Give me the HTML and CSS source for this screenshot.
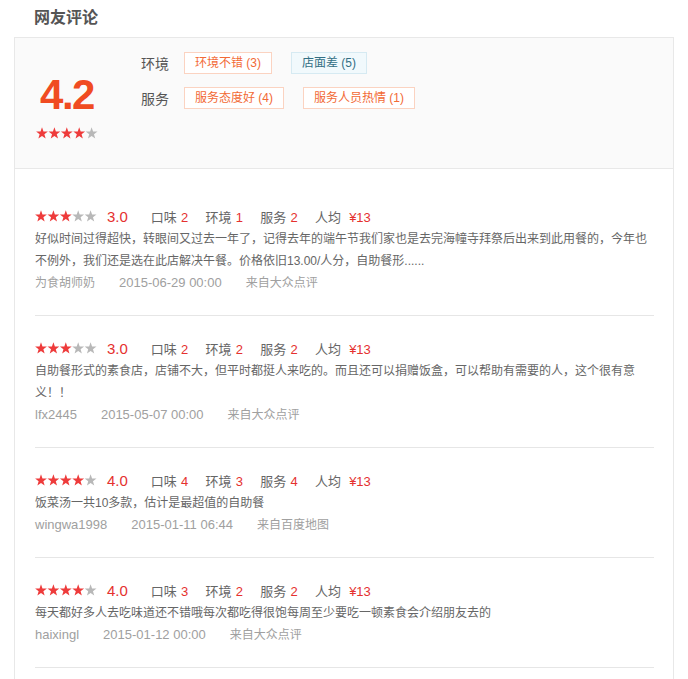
FILE: index.html
```html
<!DOCTYPE html>
<html lang="zh-CN">
<head>
<meta charset="utf-8">
<title>网友评论</title>
<link rel="stylesheet" href="styles.css">
</head>
<body>
<svg class="defs" width="0" height="0" aria-hidden="true">
  <defs>
    <polygon id="star" points="6,0.3 7.47,4.48 11.9,4.58 8.38,7.27 9.64,11.5 6,9 2.36,11.5 3.62,7.27 0.1,4.58 4.53,4.48"/>
  </defs>
</svg>
<div class="page">
  <h2 class="title">网友评论</h2>
  <div class="card">
    <div class="summary">
      <div class="score-col">
        <div class="big-score">4.2</div>
        <svg class="stars" width="62" height="12" viewBox="0 0 62 12">
          <use href="#star" x="0" class="on"/><use href="#star" x="12.4" class="on"/><use href="#star" x="24.8" class="on"/><use href="#star" x="37.2" class="on"/><use href="#star" x="49.6" class="off"/>
        </svg>
      </div>
      <div class="tags-col">
        <div class="tag-row">
          <span class="tag-label">环境</span>
          <span class="tag tag-good">环境不错 (3)</span>
          <span class="tag tag-bad">店面差 (5)</span>
        </div>
        <div class="tag-row">
          <span class="tag-label">服务</span>
          <span class="tag tag-good">服务态度好 (4)</span>
          <span class="tag tag-good">服务人员热情 (1)</span>
        </div>
      </div>
    </div>

    <ul class="reviews">
      <li class="review">
        <div class="score-row">
          <svg class="stars" width="62" height="12" viewBox="0 0 62 12">
            <use href="#star" x="0" class="on"/><use href="#star" x="12.4" class="on"/><use href="#star" x="24.8" class="on"/><use href="#star" x="37.2" class="off"/><use href="#star" x="49.6" class="off"/>
          </svg>
          <span class="rate">3.0</span>
          <span class="item">口味<em>2</em></span>
          <span class="item">环境<em>1</em></span>
          <span class="item">服务<em>2</em></span>
          <span class="item">人均<em class="money">¥13</em></span>
        </div>
        <p class="text">好似时间过得超快，转眼间又过去一年了，记得去年的端午节我们家也是去完海幢寺拜祭后出来到此用餐的，今年也不例外，我们还是选在此店解决午餐。价格依旧13.00/人分，自助餐形......</p>
        <div class="meta"><span>为食胡师奶</span><span class="latin">2015-06-29 00:00</span><span>来自大众点评</span></div>
      </li>
      <li class="review">
        <div class="score-row">
          <svg class="stars" width="62" height="12" viewBox="0 0 62 12">
            <use href="#star" x="0" class="on"/><use href="#star" x="12.4" class="on"/><use href="#star" x="24.8" class="on"/><use href="#star" x="37.2" class="off"/><use href="#star" x="49.6" class="off"/>
          </svg>
          <span class="rate">3.0</span>
          <span class="item">口味<em>2</em></span>
          <span class="item">环境<em>2</em></span>
          <span class="item">服务<em>2</em></span>
          <span class="item">人均<em class="money">¥13</em></span>
        </div>
        <p class="text">自助餐形式的素食店，店铺不大，但平时都挺人来吃的。而且还可以捐赠饭盒，可以帮助有需要的人，这个很有意义！！</p>
        <div class="meta"><span class="latin">lfx2445</span><span class="latin">2015-05-07 00:00</span><span>来自大众点评</span></div>
      </li>
      <li class="review">
        <div class="score-row">
          <svg class="stars" width="62" height="12" viewBox="0 0 62 12">
            <use href="#star" x="0" class="on"/><use href="#star" x="12.4" class="on"/><use href="#star" x="24.8" class="on"/><use href="#star" x="37.2" class="on"/><use href="#star" x="49.6" class="off"/>
          </svg>
          <span class="rate">4.0</span>
          <span class="item">口味<em>4</em></span>
          <span class="item">环境<em>3</em></span>
          <span class="item">服务<em>4</em></span>
          <span class="item">人均<em class="money">¥13</em></span>
        </div>
        <p class="text">饭菜汤一共10多款，估计是最超值的自助餐</p>
        <div class="meta"><span class="latin">wingwa1998</span><span class="latin">2015-01-11 06:44</span><span>来自百度地图</span></div>
      </li>
      <li class="review">
        <div class="score-row">
          <svg class="stars" width="62" height="12" viewBox="0 0 62 12">
            <use href="#star" x="0" class="on"/><use href="#star" x="12.4" class="on"/><use href="#star" x="24.8" class="on"/><use href="#star" x="37.2" class="on"/><use href="#star" x="49.6" class="off"/>
          </svg>
          <span class="rate">4.0</span>
          <span class="item">口味<em>3</em></span>
          <span class="item">环境<em>2</em></span>
          <span class="item">服务<em>2</em></span>
          <span class="item">人均<em class="money">¥13</em></span>
        </div>
        <p class="text">每天都好多人去吃味道还不错哦每次都吃得很饱每周至少要吃一顿素食会介绍朋友去的</p>
        <div class="meta"><span class="latin">haixingl</span><span class="latin">2015-01-12 00:00</span><span>来自大众点评</span></div>
      </li>
    </ul>
  </div>
</div>
</body>
</html>
```

FILE: styles.css
```css
* {
  box-sizing: border-box;
}

html, body {
  margin: 0;
  padding: 0;
  background: #fff;
}

body {
  font-family: "Liberation Sans", "Noto Sans CJK SC", sans-serif;
  color: #666;
  font-size: 12px;
}

.defs {
  position: absolute;
  width: 0;
  height: 0;
  overflow: hidden;
}

.page {
  padding-left: 14px;
  width: 674px;
}

.title {
  margin: 0;
  height: 37px;
  line-height: 36px;
  padding-left: 20px;
  font-size: 16px;
  font-weight: bold;
  color: #555;
}

.card {
  border: 1px solid #e8e8e8;
  width: 660px;
}

.summary {
  display: flex;
  height: 131px;
  background: #fafafa;
  border-bottom: 1px solid #e8e8e8;
}

.score-col {
  display: flex;
  flex-direction: column;
  align-items: center;
  width: 62px;
  margin-left: 21px;
  padding-top: 36px;
}

.big-score {
  font-family: "Liberation Sans", sans-serif;
  font-size: 42px;
  line-height: 42px;
  font-weight: bold;
  letter-spacing: -1.5px;
  color: #f04b21;
}

.score-col .stars {
  margin-top: 11px;
}

.stars {
  display: block;
  flex: none;
}

.stars .on {
  fill: #ee3b3b;
}

.stars .off {
  fill: #b8b8b8;
}

.tags-col {
  display: flex;
  flex-direction: column;
  gap: 13px;
  margin-left: 43px;
  padding-top: 14px;
}

.tag-row {
  display: flex;
  align-items: center;
}

.tag-label {
  font-size: 14px;
  color: #555;
  margin-right: 15px;
}

.tag {
  display: inline-block;
  height: 22px;
  line-height: 20px;
  padding: 0 10px;
  margin-right: 19px;
  border: 1px solid #fbd3c1;
  background: #fff;
  color: #f26a35;
  font-size: 12px;
}

.tag-bad {
  border-color: #d6eaf2;
  background: #f1f9fc;
  color: #336f84;
}

.reviews {
  list-style: none;
  margin: 0;
  padding: 15px 19px 20px 20px;
}

.review {
  padding: 20px 0 21px;
  border-bottom: 1px solid #e6e6e6;
}

.score-row {
  display: flex;
  align-items: center;
  height: 24px;
}

.rate {
  margin-left: 10px;
  margin-right: 23px;
  font-size: 15px;
  color: #e5312f;
}

.item {
  font-size: 13px;
  color: #666;
  margin-right: 17.5px;
}

.item em {
  font-style: normal;
  color: #e5312f;
  margin-left: 4px;
}

.item em.money {
  margin-left: 8px;
}

.text {
  margin: 0;
  font-size: 12px;
  line-height: 22px;
  color: #666;
}

.meta {
  display: flex;
  gap: 24px;
  font-size: 12px;
  line-height: 22px;
  color: #a0a0a0;
}

.meta .latin {
  font-size: 13px;
}
```
